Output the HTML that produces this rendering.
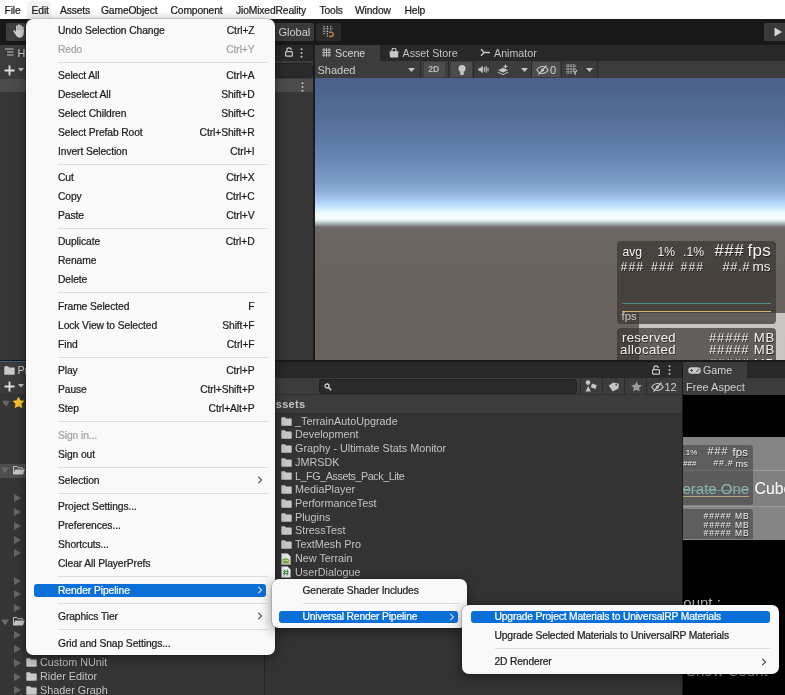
<!DOCTYPE html>
<html><head><meta charset="utf-8"><title>Unity Editor</title>
<style>
html,body{margin:0;padding:0;background:#383838;}
body{width:785px;height:695px;overflow:hidden;position:relative;font-family:"Liberation Sans",Arial,sans-serif;}
#root{position:absolute;left:0;top:0;width:785px;height:695px;overflow:hidden;will-change:transform;}
.abs{position:absolute;}
.t{position:absolute;white-space:pre;line-height:1;}
.u{position:absolute;white-space:pre;line-height:1;font-size:10.8px;color:#c3c3c3;}
.m{position:absolute;white-space:pre;line-height:1;font-size:10.3px;color:#1b1b1b;letter-spacing:-0.1px;-webkit-text-stroke:0.22px currentColor;}
.menu{position:absolute;background:#f9f9f9;border-radius:7px;box-shadow:0 0 0 0.6px rgba(0,0,0,.25),0 3px 12px 1px rgba(0,0,0,.38);}
.sep{position:absolute;height:1px;background:#dedede;}
.hl{position:absolute;background:#0a6fd6;border-radius:3px;}
.fold{position:absolute;width:11px;height:9px;}
.tri{position:absolute;width:0;height:0;border-left:7px solid #656565;border-top:4px solid transparent;border-bottom:4px solid transparent;}
</style></head><body><div id="root">

<div class="abs" style="left:0;top:0;width:785px;height:19px;background:#fff"></div>
<div class="abs" style="left:27px;top:1px;width:24px;height:17px;background:#f3f3f3;border-radius:3px"></div>
<div class="m" style="left:4.5px;top:5.8px;letter-spacing:-.14px">File</div>
<div class="m" style="left:31.6px;top:5.8px;letter-spacing:-.14px">Edit</div>
<div class="m" style="left:60px;top:5.8px;letter-spacing:-.14px">Assets</div>
<div class="m" style="left:101px;top:5.8px;letter-spacing:-.14px">GameObject</div>
<div class="m" style="left:170.5px;top:5.8px;letter-spacing:-.14px">Component</div>
<div class="m" style="left:236px;top:5.8px;letter-spacing:-.14px">JioMixedReality</div>
<div class="m" style="left:319.5px;top:5.8px;letter-spacing:-.14px">Tools</div>
<div class="m" style="left:355px;top:5.8px;letter-spacing:-.14px">Window</div>
<div class="m" style="left:404.5px;top:5.8px;letter-spacing:-.14px">Help</div>
<div class="abs" style="left:0;top:19px;width:785px;height:25.5px;background:#191919"></div>
<div class="abs" style="left:6px;top:23px;width:20px;height:18px;background:#3e3e3e;border-radius:2px"></div>
<div class="abs" style="left:270px;top:23px;width:44px;height:18px;background:#3a3a3a;border-radius:0 2px 2px 0"></div>
<div class="u" style="left:278.5px;top:27px;font-size:11px;color:#d0d0d0">Global</div>
<div class="abs" style="left:316px;top:23px;width:25px;height:18px;background:#2b2b2b;border-radius:2px"></div>
<div class="abs" style="left:764px;top:23px;width:24px;height:18px;background:#3a3a3a;border-radius:2px"></div>
<svg class="abs" style="left:774px;top:27px" width="9" height="10" viewBox="0 0 9 10"><path d="M0.5 0.5 L8 5 L0.5 9.5Z" fill="#d6d6d6"/></svg>
<svg class="abs" style="left:323px;top:26.3px" width="12" height="12" viewBox="0 0 12 12"><g stroke="#c9c9c9" stroke-width="1.1" stroke-dasharray="1.3 1"><path d="M1 0V9M4.4 0V11M7.8 0V5"/></g><g stroke="#9a9a9a" stroke-width=".8" stroke-dasharray="1.3 1"><path d="M0 2.6H10M0 5.8H6"/></g><path d="M6 6.2h2.2a2.1 2.1 0 0 1 0 4.2H6" fill="none" stroke="#b9773a" stroke-width="1.6"/></svg>
<svg class="abs" style="left:12.5px;top:24.3px" width="12" height="14" viewBox="0 0 12 14"><g fill="#d4d4d4"><rect x="3.1" y="1.3" width="1.7" height="7" rx=".85"/><rect x="5.1" y="0.3" width="1.7" height="7" rx=".85"/><rect x="7.1" y="0.9" width="1.7" height="7" rx=".85"/><rect x="9.1" y="2.6" width="1.6" height="6" rx=".8"/><path d="M3.1 6h7.6v3.2c0 2.6-1.5 4.5-3.9 4.5-1.7 0-2.7-.8-3.6-2.1L.4 7.5c-.5-.9.6-1.7 1.3-1L3.1 8z"/></g></svg>
<div class="abs" style="left:0;top:44.5px;width:314px;height:16.2px;background:#282828"></div>
<div class="abs" style="left:0;top:44.5px;width:60px;height:16.2px;background:#3c3c3c"></div>
<div class="abs" style="left:0;top:60.6px;width:314px;height:18.2px;background:#3c3c3c"></div>
<div class="abs" style="left:0;top:78.8px;width:314px;height:13.5px;background:#4b4b4b"></div>
<div class="abs" style="left:0;top:92.3px;width:314px;height:267.7px;background:#363636"></div>
<div class="abs" style="left:313px;top:44px;width:2px;height:316px;background:#1c1c1c"></div>
<svg class="abs" style="left:5px;top:48px" width="9" height="8" viewBox="0 0 9 8"><path d="M0 1H8.5M2 4H8.5M2 7H8.5" stroke="#bdbdbd" stroke-width="1.2"/></svg>
<div class="u" style="left:17.5px;top:48px;color:#d2d2d2">Hierarchy</div>
<svg class="abs" style="left:3.5px;top:64.5px" width="11" height="11" viewBox="0 0 11 11"><path d="M5.5 0.5V10.5M0.5 5.5H10.5" stroke="#e0e0e0" stroke-width="1.8"/></svg>
<svg class="abs" style="left:17.8px;top:67.6px" width="6" height="4" viewBox="0 0 6 4"><path d="M0 0H6L3 3.6Z" fill="#c4c4c4"/></svg>
<div class="abs" style="left:40px;top:63.5px;width:272px;height:13px;background:#2a2a2a;border-radius:3px;box-shadow:0 0 0 1px #222"></div>
<svg class="abs" style="left:284.5px;top:47px" width="8" height="10" viewBox="0 0 8 10"><rect x="0.6" y="4.6" width="6.8" height="4.6" rx="0.8" fill="none" stroke="#c4c4c4" stroke-width="1.2"/><path d="M1.8 4.6V3a2.2 2.2 0 0 1 4.4 0" fill="none" stroke="#c4c4c4" stroke-width="1.2"/></svg>
<svg class="abs" style="left:300.3px;top:47.5px" width="3" height="10" viewBox="0 0 3 10"><circle cx="1.5" cy="1.3" r="1" fill="#c4c4c4"/><circle cx="1.5" cy="5" r="1" fill="#c4c4c4"/><circle cx="1.5" cy="8.7" r="1" fill="#c4c4c4"/></svg>
<svg class="abs" style="left:301.3px;top:81.5px" width="3" height="10" viewBox="0 0 3 10"><circle cx="1.5" cy="1.3" r="1" fill="#c4c4c4"/><circle cx="1.5" cy="5" r="1" fill="#c4c4c4"/><circle cx="1.5" cy="8.7" r="1" fill="#c4c4c4"/></svg>
<div class="abs" style="left:315px;top:44.5px;width:470px;height:16.2px;background:#282828"></div>
<div class="abs" style="left:315px;top:44.5px;width:65px;height:16.2px;background:#3c3c3c"></div>
<div class="abs" style="left:315px;top:60.6px;width:470px;height:18px;background:#3c3c3c"></div>
<div class="abs" style="left:315px;top:77.8px;width:470px;height:.8px;background:#262626"></div>
<svg class="abs" style="left:321.5px;top:48px" width="9" height="9" viewBox="0 0 9 9"><path d="M2 0V9M4.5 0V9M7 0V9M0 2H9M0 4.5H9M0 7H9" stroke="#c4c4c4" stroke-width="0.9"/></svg>
<div class="u" style="left:335px;top:48.2px;color:#d6d6d6;font-size:10.7px">Scene</div>
<svg class="abs" style="left:388.7px;top:47.6px" width="10" height="10" viewBox="0 0 10 10"><path d="M0.5 3.2H9.5L9 9.6H1Z" fill="#c8c8c8"/><path d="M3 4V2.2a2 2 0 0 1 4 0V4" fill="none" stroke="#c8c8c8" stroke-width="1.1"/></svg>
<div class="u" style="left:402.5px;top:48.2px;font-size:10.7px">Asset Store</div>
<svg class="abs" style="left:480px;top:48px" width="11" height="9" viewBox="0 0 11 9"><path d="M1 1.2L4.2 4.5L1 7.8M4.2 4.5H10" fill="none" stroke="#c8c8c8" stroke-width="1.4"/></svg>
<div class="u" style="left:494px;top:48.2px;font-size:10.7px">Animator</div>
<div class="u" style="left:317.5px;top:65px;font-size:11px;color:#cfcfcf">Shaded</div>
<svg class="abs" style="left:407.5px;top:68px" width="7" height="4" viewBox="0 0 7 4"><path d="M0 0H7L3.5 4Z" fill="#c4c4c4"/></svg>
<div class="abs" style="left:420px;top:60.6px;width:1px;height:17.6px;background:#2a2a2a"></div>
<div class="abs" style="left:424px;top:61.6px;width:21px;height:15.8px;background:#4c4c4c"></div>
<div class="u" style="left:428.3px;top:65.3px;font-size:8.6px;font-weight:bold;color:#bdbdbd">2D</div>
<div class="abs" style="left:448px;top:60.6px;width:1px;height:17.6px;background:#2a2a2a"></div>
<div class="abs" style="left:451px;top:61.6px;width:21px;height:15.8px;background:#4c4c4c"></div>
<svg class="abs" style="left:457.5px;top:64.5px" width="8" height="11" viewBox="0 0 8 11"><circle cx="4" cy="3.6" r="3.5" fill="#c8c8c8"/><rect x="2.3" y="6.5" width="3.4" height="3.6" rx="0.6" fill="#c8c8c8"/></svg>
<div class="abs" style="left:473px;top:60.6px;width:1px;height:17.6px;background:#2a2a2a"></div>
<svg class="abs" style="left:478px;top:65px" width="11" height="9" viewBox="0 0 11 9"><path d="M0.5 3H2.2L4.8 0.8V8.2L2.2 6H0.5Z" fill="#c4c4c4"/><path d="M6.4 2.2V6.8M8.2 1.2V7.8M10 2.8V6.2" stroke="#c4c4c4" stroke-width="1.1"/></svg>
<svg class="abs" style="left:497px;top:64px" width="12" height="11" viewBox="0 0 12 11"><path d="M1 6.2L6 3.8L11 6.2L6 8.6Z" fill="#c4c4c4"/><path d="M1 8.2L6 10.6L11 8.2" fill="none" stroke="#c4c4c4" stroke-width="1"/><path d="M8.5 0L9.2 1.8L11 2.5L9.2 3.2L8.5 5L7.8 3.2L6 2.5L7.8 1.8Z" fill="#c4c4c4"/></svg>
<svg class="abs" style="left:520.5px;top:68px" width="7" height="4" viewBox="0 0 7 4"><path d="M0 0H7L3.5 4Z" fill="#c4c4c4"/></svg>
<div class="abs" style="left:531px;top:60.6px;width:1px;height:17.6px;background:#2a2a2a"></div>
<div class="abs" style="left:532px;top:61.6px;width:28px;height:15.8px;background:#4c4c4c"></div>
<svg class="abs" style="left:535.5px;top:64.5px" width="13" height="10" viewBox="0 0 13 10"><path d="M0.8 5C2.5 2.4 4.4 1.5 6.5 1.5S10.5 2.4 12.2 5C10.5 7.6 8.6 8.5 6.5 8.5S2.5 7.6 0.8 5Z" fill="none" stroke="#c4c4c4" stroke-width="1.1"/><circle cx="6.5" cy="5" r="1.6" fill="#c4c4c4"/><path d="M2.5 9.5L10.5 0.5" stroke="#c4c4c4" stroke-width="1.2"/></svg>
<div class="u" style="left:550px;top:65px;font-size:11px;color:#cfcfcf">0</div>
<div class="abs" style="left:561px;top:60.6px;width:1px;height:17.6px;background:#2a2a2a"></div>
<svg class="abs" style="left:565.5px;top:64px" width="12" height="11" viewBox="0 0 12 11"><g stroke="#c4c4c4" stroke-width="1" stroke-dasharray="1.3 0.9"><path d="M2 0V11M5 0V11M8 0V6"/><path d="M0 2H11M0 5H11M0 8H6"/></g><path d="M7 6.2L9 8.8L11 6.2M9 8.8V11" fill="none" stroke="#c4c4c4" stroke-width="1.2"/></svg>
<svg class="abs" style="left:586px;top:68px" width="7" height="4" viewBox="0 0 7 4"><path d="M0 0H7L3.5 4Z" fill="#c4c4c4"/></svg>
<div class="abs" style="left:596.5px;top:60.6px;width:1px;height:17.6px;background:#2a2a2a"></div>
<div class="abs" style="left:314.5px;top:78.3px;width:470.5px;height:281.7px;background:linear-gradient(to bottom,#4a618b 0px,#4f6890 21px,#546e98 41px,#5c79a6 61px,#6685b3 81px,#7a9ac6 101px,#8aaad6 111px,#9dbde6 118px,#b3d5f8 125px,#c6e5fb 129px,#dcf3fd 132px,#f0fbfe 135.5px,#f6fdfe 137.5px,#f6fdfe 141px,#c5d5d3 144px,#8e9897 147px,#726d6e 149px,#6e6766 151px,#6a6561 161px,#69635e 200px,#6a625c 281px)"></div>
<div class="abs" style="left:639px;top:313px;width:146px;height:47px;background:rgba(225,225,225,.78)"></div>
<div class="abs" style="left:616.5px;top:241px;width:159.5px;height:82.5px;background:rgba(58,54,50,.72);border-radius:4px"></div>
<div class="abs" style="left:616.5px;top:328px;width:159.5px;height:40px;background:rgba(58,54,50,.72);border-radius:4px 4px 0 0"></div>
<div class="abs" style="left:621.5px;top:302.5px;width:149px;height:1.3px;background:#4f8a89"></div>
<div class="abs" style="left:621.5px;top:310.8px;width:149px;height:1.3px;background:#d6b46e"></div>
<div class="t" style="left:622.5px;top:245.5px;font-size:12.2px;color:#f2f2f2;text-shadow:0.6px 0.8px 0 rgba(0,0,0,.55);">avg</div>
<div class="t" style="left:657.5px;top:245.5px;font-size:12.2px;color:#f2f2f2;text-shadow:0.6px 0.8px 0 rgba(0,0,0,.55);">1%</div>
<div class="t" style="left:683px;top:245.5px;font-size:12.2px;color:#f2f2f2;text-shadow:0.6px 0.8px 0 rgba(0,0,0,.55);">.1%</div>
<div class="t" style="left:714.5px;top:241.5px;font-size:16.5px;letter-spacing:.8px;color:#f2f2f2;text-shadow:0.6px 0.8px 0 rgba(0,0,0,.55);">###</div>
<div class="t" style="left:747.5px;top:241.5px;font-size:17px;letter-spacing:.3px;color:#f2f2f2;text-shadow:0.6px 0.8px 0 rgba(0,0,0,.55);">fps</div>
<div class="t" style="left:620.5px;top:261px;font-size:12.2px;letter-spacing:1.1px;color:#f2f2f2;text-shadow:0.6px 0.8px 0 rgba(0,0,0,.55);">###</div>
<div class="t" style="left:651px;top:261px;font-size:12.2px;letter-spacing:1.1px;color:#f2f2f2;text-shadow:0.6px 0.8px 0 rgba(0,0,0,.55);">###</div>
<div class="t" style="left:680.5px;top:261px;font-size:12.2px;letter-spacing:1.1px;color:#f2f2f2;text-shadow:0.6px 0.8px 0 rgba(0,0,0,.55);">###</div>
<div class="t" style="left:722.5px;top:260px;font-size:13px;letter-spacing:.6px;color:#f2f2f2;text-shadow:0.6px 0.8px 0 rgba(0,0,0,.55);">##.#</div>
<div class="t" style="left:752.5px;top:260px;font-size:13.6px;color:#f2f2f2;text-shadow:0.6px 0.8px 0 rgba(0,0,0,.55);">ms</div>
<div class="t" style="left:621.5px;top:310.8px;font-size:11.3px;color:#cfcac3">fps</div>
<div class="t" style="right:109px;top:330.5px;font-size:13.2px;letter-spacing:.35px;color:#f2f2f2;text-shadow:0.6px 0.8px 0 rgba(0,0,0,.55);">reserved</div>
<div class="t" style="right:109px;top:342.5px;font-size:13.2px;letter-spacing:.35px;color:#f2f2f2;text-shadow:0.6px 0.8px 0 rgba(0,0,0,.55);">allocated</div>
<div class="t" style="left:709px;top:330.5px;font-size:13.2px;letter-spacing:.75px;color:#f2f2f2;text-shadow:0.6px 0.8px 0 rgba(0,0,0,.55);">##### MB</div>
<div class="t" style="left:709px;top:342.5px;font-size:13.2px;letter-spacing:.75px;color:#f2f2f2;text-shadow:0.6px 0.8px 0 rgba(0,0,0,.55);">##### MB</div>
<div class="abs" style="left:616px;top:352px;width:169px;height:8px;overflow:hidden"><div class="t" style="left:64px;top:4.5px;font-size:13.2px;color:#f2f2f2;text-shadow:0.6px 0.8px 0 rgba(0,0,0,.55);">mono</div><div class="t" style="left:93px;top:4.5px;font-size:13.2px;letter-spacing:.75px;color:#f2f2f2;text-shadow:0.6px 0.8px 0 rgba(0,0,0,.55);">##### MB</div></div>
<div class="abs" style="left:0;top:360px;width:785px;height:2px;background:#191919"></div>
<div class="abs" style="left:0;top:362px;width:682px;height:16px;background:#282828"></div>
<div class="abs" style="left:0;top:361px;width:62px;height:17px;background:#3c3c3c"></div>
<div class="abs" style="left:0;top:361.2px;width:62px;height:1.3px;background:#3a5c8c"></div>
<div class="abs" style="left:0;top:378px;width:682px;height:17px;background:#3c3c3c"></div>
<div class="abs" style="left:0;top:395px;width:264px;height:300px;background:#353535"></div>
<div class="abs" style="left:264px;top:395px;width:1px;height:300px;background:#232323"></div>
<div class="abs" style="left:265px;top:395px;width:417px;height:18px;background:#3c3c3c"></div>
<div class="abs" style="left:265px;top:413px;width:417px;height:1px;background:#2a2a2a"></div>
<div class="abs" style="left:0px;top:394.3px;width:682px;height:.9px;background:#303030"></div>
<div class="abs" style="left:265px;top:414px;width:417px;height:281px;background:#333333"></div>
<div class="abs" style="left:681.5px;top:362px;width:1.5px;height:333px;background:#1c1c1c"></div>
<svg class="abs" style="left:4px;top:365.5px" width="11" height="9" viewBox="0 0 11 9"><path d="M0.3 0.9a.6.6 0 0 1 .6-.6H4l1 1.3h5.1a.6.6 0 0 1 .6.6V8.1a.6.6 0 0 1-.6.6H.9a.6.6 0 0 1-.6-.6Z" fill="#c8c8c8"/></svg>
<div class="u" style="left:17.6px;top:365px;color:#d2d2d2">Project</div>
<svg class="abs" style="left:3.5px;top:381px" width="11" height="11" viewBox="0 0 11 11"><path d="M5.5 0.5V10.5M0.5 5.5H10.5" stroke="#e0e0e0" stroke-width="1.8"/></svg>
<svg class="abs" style="left:17.8px;top:383.8px" width="6" height="4" viewBox="0 0 6 4"><path d="M0 0H6L3 3.6Z" fill="#c4c4c4"/></svg>
<svg class="abs" style="left:1.5px;top:399.8px" width="8" height="7.5" viewBox="0 0 8 6"><path d="M0 0H8L4 6Z" fill="#63655f"/></svg>
<svg class="abs" style="left:13.3px;top:396.6px" width="11" height="11" viewBox="0 0 11 11"><path d="M5.5 0.1L7.3 3.6L11 4.1L8.3 6.8L9 10.7L5.5 8.9L2 10.7L2.7 6.8L0 4.1L3.7 3.6Z" fill="#fdc72c" stroke="#fdc72c" stroke-width=".5" stroke-linejoin="round"/></svg>
<div class="abs" style="left:0;top:464px;width:264px;height:13.5px;background:#4d4d4d"></div>
<svg class="abs" style="left:1.2px;top:467.40000000000003px" width="8" height="7" viewBox="0 0 8 6"><path d="M0 0H8L4 6Z" fill="#696969"/></svg>
<svg class="abs" style="left:13px;top:466.1px" width="12" height="9" viewBox="0 0 12 9"><path d="M0.5 8.2V1a.5.5 0 0 1 .5-.5H4l1 1.3h4.3a.5.5 0 0 1 .5.5V3.4" fill="none" stroke="#c8c8c8" stroke-width="1"/><path d="M2.2 3.4H11.8L10 8.6H0.4Z" fill="#c8c8c8"/></svg>
<svg class="abs" style="left:1.2px;top:618.5px" width="8" height="7" viewBox="0 0 8 6"><path d="M0 0H8L4 6Z" fill="#696969"/></svg>
<svg class="abs" style="left:13px;top:617.2px" width="12" height="9" viewBox="0 0 12 9"><path d="M0.5 8.2V1a.5.5 0 0 1 .5-.5H4l1 1.3h4.3a.5.5 0 0 1 .5.5V3.4" fill="none" stroke="#c8c8c8" stroke-width="1"/><path d="M2.2 3.4H11.8L10 8.6H0.4Z" fill="#c8c8c8"/></svg>
<div class="tri" style="left:14px;top:494px"></div>
<div class="tri" style="left:14px;top:508px"></div>
<div class="tri" style="left:14px;top:522px"></div>
<div class="tri" style="left:14px;top:535.6px"></div>
<div class="tri" style="left:14px;top:549.3px"></div>
<div class="tri" style="left:14px;top:576.5px"></div>
<div class="tri" style="left:14px;top:590px"></div>
<div class="tri" style="left:14px;top:604px"></div>
<div class="tri" style="left:14px;top:631.4px"></div>
<div class="tri" style="left:14px;top:645px"></div>
<div class="tri" style="left:14px;top:658.8px"></div>
<div class="tri" style="left:14px;top:672.5px"></div>
<div class="tri" style="left:14px;top:686.2px"></div>
<svg class="abs" style="left:25.5px;top:658.0999999999999px" width="11" height="9" viewBox="0 0 11 9"><path d="M0.3 0.9a.6.6 0 0 1 .6-.6H4l1 1.3h5.1a.6.6 0 0 1 .6.6V8.1a.6.6 0 0 1-.6.6H.9a.6.6 0 0 1-.6-.6Z" fill="#c8c8c8"/></svg>
<div class="u" style="left:40px;top:657.1999999999999px">Custom NUnit</div>
<svg class="abs" style="left:25.5px;top:671.8px" width="11" height="9" viewBox="0 0 11 9"><path d="M0.3 0.9a.6.6 0 0 1 .6-.6H4l1 1.3h5.1a.6.6 0 0 1 .6.6V8.1a.6.6 0 0 1-.6.6H.9a.6.6 0 0 1-.6-.6Z" fill="#c8c8c8"/></svg>
<div class="u" style="left:40px;top:670.9px">Rider Editor</div>
<svg class="abs" style="left:25.5px;top:685.5px" width="11" height="9" viewBox="0 0 11 9"><path d="M0.3 0.9a.6.6 0 0 1 .6-.6H4l1 1.3h5.1a.6.6 0 0 1 .6.6V8.1a.6.6 0 0 1-.6.6H.9a.6.6 0 0 1-.6-.6Z" fill="#c8c8c8"/></svg>
<div class="u" style="left:40px;top:684.6px">Shader Graph</div>
<div class="abs" style="left:320px;top:380px;width:256px;height:12.5px;background:#2a2a2a;border-radius:3px;box-shadow:0 0 0 1px #212121"></div>
<svg class="abs" style="left:323.5px;top:382.5px" width="8" height="8" viewBox="0 0 8 8"><circle cx="3" cy="3" r="2" fill="none" stroke="#d0d0d0" stroke-width="1.3"/><path d="M4.6 4.6L7.2 7.2" stroke="#d0d0d0" stroke-width="1.5"/></svg>
<div class="abs" style="left:580px;top:378px;width:1px;height:17px;background:#2c2c2c"></div>
<div class="abs" style="left:602px;top:378px;width:1px;height:17px;background:#2c2c2c"></div>
<div class="abs" style="left:623.5px;top:378px;width:1px;height:17px;background:#2c2c2c"></div>
<div class="abs" style="left:645.6px;top:378px;width:1px;height:17px;background:#2c2c2c"></div>
<svg class="abs" style="left:584.5px;top:380px" width="12" height="12" viewBox="0 0 12 12"><circle cx="3" cy="2.6" r="2.3" fill="#c4c4c4"/><path d="M0.6 11.4L3.2 5.8L5.8 11.4Z" fill="#c4c4c4"/><rect x="6.4" y="4.4" width="5" height="4" fill="#c4c4c4" transform="rotate(20 9 6)"/></svg>
<svg class="abs" style="left:607.5px;top:381.5px" width="11" height="10" viewBox="0 0 11 10"><path d="M4.8 0.6L10.4 1L10.6 5.8L5.4 9.6L0.6 4.2Z" fill="#c4c4c4" transform="rotate(8 5 5)"/><circle cx="8.2" cy="2.8" r="0.9" fill="#3c3c3c"/></svg>
<svg class="abs" style="left:630.5px;top:381px" width="11" height="11" viewBox="0 0 11 11"><path d="M5.5 0.3L7.1 3.8L10.9 4.2L8.1 6.8L8.9 10.6L5.5 8.7L2.1 10.6L2.9 6.8L0.1 4.2L3.9 3.8Z" fill="#9a9a9a"/></svg>
<svg class="abs" style="left:651px;top:381.5px" width="13" height="10" viewBox="0 0 13 10"><path d="M0.8 5C2.5 2.4 4.4 1.5 6.5 1.5S10.5 2.4 12.2 5C10.5 7.6 8.6 8.5 6.5 8.5S2.5 7.6 0.8 5Z" fill="none" stroke="#c4c4c4" stroke-width="1.1"/><circle cx="6.5" cy="5" r="1.6" fill="#c4c4c4"/><path d="M2.5 9.5L10.5 0.5" stroke="#c4c4c4" stroke-width="1.2"/></svg>
<div class="u" style="left:664.5px;top:382px;font-size:11px;color:#cfcfcf">12</div>
<svg class="abs" style="left:651.5px;top:364.5px" width="8" height="10" viewBox="0 0 8 10"><rect x="0.6" y="4.6" width="6.8" height="4.6" rx="0.8" fill="none" stroke="#c4c4c4" stroke-width="1.2"/><path d="M1.8 4.6V3a2.2 2.2 0 0 1 4.4 0" fill="none" stroke="#c4c4c4" stroke-width="1.2"/></svg>
<svg class="abs" style="left:667.8px;top:364.5px" width="3" height="10" viewBox="0 0 3 10"><circle cx="1.5" cy="1.3" r="1" fill="#c4c4c4"/><circle cx="1.5" cy="5" r="1" fill="#c4c4c4"/><circle cx="1.5" cy="8.7" r="1" fill="#c4c4c4"/></svg>
<div class="u" style="left:267.5px;top:398.5px;font-weight:bold;font-size:11px;color:#c6c6c6;letter-spacing:.3px">Assets</div>
<svg class="abs" style="left:280.5px;top:416.5px" width="11" height="9" viewBox="0 0 11 9"><path d="M0.3 0.9a.6.6 0 0 1 .6-.6H4l1 1.3h5.1a.6.6 0 0 1 .6.6V8.1a.6.6 0 0 1-.6.6H.9a.6.6 0 0 1-.6-.6Z" fill="#c8c8c8"/></svg>
<div class="u" style="left:295px;top:415.6px">_TerrainAutoUpgrade</div>
<svg class="abs" style="left:280.5px;top:430.2px" width="11" height="9" viewBox="0 0 11 9"><path d="M0.3 0.9a.6.6 0 0 1 .6-.6H4l1 1.3h5.1a.6.6 0 0 1 .6.6V8.1a.6.6 0 0 1-.6.6H.9a.6.6 0 0 1-.6-.6Z" fill="#c8c8c8"/></svg>
<div class="u" style="left:295px;top:429.3px">Development</div>
<svg class="abs" style="left:280.5px;top:444.0px" width="11" height="9" viewBox="0 0 11 9"><path d="M0.3 0.9a.6.6 0 0 1 .6-.6H4l1 1.3h5.1a.6.6 0 0 1 .6.6V8.1a.6.6 0 0 1-.6.6H.9a.6.6 0 0 1-.6-.6Z" fill="#c8c8c8"/></svg>
<div class="u" style="left:295px;top:443.1px">Graphy - Ultimate Stats Monitor</div>
<svg class="abs" style="left:280.5px;top:457.7px" width="11" height="9" viewBox="0 0 11 9"><path d="M0.3 0.9a.6.6 0 0 1 .6-.6H4l1 1.3h5.1a.6.6 0 0 1 .6.6V8.1a.6.6 0 0 1-.6.6H.9a.6.6 0 0 1-.6-.6Z" fill="#c8c8c8"/></svg>
<div class="u" style="left:295px;top:456.8px">JMRSDK</div>
<svg class="abs" style="left:280.5px;top:471.4px" width="11" height="9" viewBox="0 0 11 9"><path d="M0.3 0.9a.6.6 0 0 1 .6-.6H4l1 1.3h5.1a.6.6 0 0 1 .6.6V8.1a.6.6 0 0 1-.6.6H.9a.6.6 0 0 1-.6-.6Z" fill="#c8c8c8"/></svg>
<div class="u" style="left:295px;top:470.5px;letter-spacing:-.45px">L_FG_Assets_Pack_Lite</div>
<svg class="abs" style="left:280.5px;top:485.2px" width="11" height="9" viewBox="0 0 11 9"><path d="M0.3 0.9a.6.6 0 0 1 .6-.6H4l1 1.3h5.1a.6.6 0 0 1 .6.6V8.1a.6.6 0 0 1-.6.6H.9a.6.6 0 0 1-.6-.6Z" fill="#c8c8c8"/></svg>
<div class="u" style="left:295px;top:484.2px">MediaPlayer</div>
<svg class="abs" style="left:280.5px;top:498.9px" width="11" height="9" viewBox="0 0 11 9"><path d="M0.3 0.9a.6.6 0 0 1 .6-.6H4l1 1.3h5.1a.6.6 0 0 1 .6.6V8.1a.6.6 0 0 1-.6.6H.9a.6.6 0 0 1-.6-.6Z" fill="#c8c8c8"/></svg>
<div class="u" style="left:295px;top:498.0px">PerformanceTest</div>
<svg class="abs" style="left:280.5px;top:512.6px" width="11" height="9" viewBox="0 0 11 9"><path d="M0.3 0.9a.6.6 0 0 1 .6-.6H4l1 1.3h5.1a.6.6 0 0 1 .6.6V8.1a.6.6 0 0 1-.6.6H.9a.6.6 0 0 1-.6-.6Z" fill="#c8c8c8"/></svg>
<div class="u" style="left:295px;top:511.7px">Plugins</div>
<svg class="abs" style="left:280.5px;top:526.3px" width="11" height="9" viewBox="0 0 11 9"><path d="M0.3 0.9a.6.6 0 0 1 .6-.6H4l1 1.3h5.1a.6.6 0 0 1 .6.6V8.1a.6.6 0 0 1-.6.6H.9a.6.6 0 0 1-.6-.6Z" fill="#c8c8c8"/></svg>
<div class="u" style="left:295px;top:525.4px">StressTest</div>
<svg class="abs" style="left:280.5px;top:540.1px" width="11" height="9" viewBox="0 0 11 9"><path d="M0.3 0.9a.6.6 0 0 1 .6-.6H4l1 1.3h5.1a.6.6 0 0 1 .6.6V8.1a.6.6 0 0 1-.6.6H.9a.6.6 0 0 1-.6-.6Z" fill="#c8c8c8"/></svg>
<div class="u" style="left:295px;top:539.2px">TextMesh Pro</div>
<svg class="abs" style="left:281px;top:552.5px" width="10" height="12" viewBox="0 0 10 12"><path d="M0.5 0.5H6.5L9.5 3.5V11.5H0.5Z" fill="#e8e8e8" stroke="#9a9a9a" stroke-width=".6"/><path d="M1.5 10.5V6.5C3.5 4.5 6.5 4.8 8.5 7V10.5Z" fill="#6fa63a"/><path d="M1.5 8.5C3.5 6.5 6 7 8.5 9" stroke="#e8f0d8" stroke-width=".8" fill="none"/></svg>
<div class="u" style="left:295px;top:552.9px">New Terrain</div>
<svg class="abs" style="left:281px;top:566.23px" width="10" height="12" viewBox="0 0 10 12"><path d="M0.5 0.5H6.5L9.5 3.5V11.5H0.5Z" fill="#eeeeee" stroke="#9a9a9a" stroke-width=".6"/><path d="M3.8 3.5L3.2 9.5M6.6 3.5L6 9.5M2.2 5.4H7.8M1.9 7.6H7.5" stroke="#3f8a4a" stroke-width="1"/></svg>
<div class="u" style="left:295px;top:566.6px">UserDialogue</div>
<div class="abs" style="left:683px;top:362px;width:102px;height:16px;background:#282828"></div>
<div class="abs" style="left:683px;top:362px;width:63.5px;height:16px;background:#3c3c3c"></div>
<div class="abs" style="left:683px;top:378px;width:102px;height:17px;background:#3c3c3c"></div>
<div class="abs" style="left:683px;top:395px;width:102px;height:300px;background:#000"></div>
<svg class="abs" style="left:687.5px;top:366.5px" width="13" height="7" viewBox="0 0 13 7"><rect x="0.2" y="0.3" width="12.6" height="6.4" rx="3.2" fill="#c8c8c8"/><path d="M2.2 3.5H5M3.6 2.1V4.9" stroke="#3c3c3c" stroke-width="0.9"/><circle cx="9" cy="4.2" r="0.8" fill="#3c3c3c"/><circle cx="10.6" cy="2.8" r="0.8" fill="#3c3c3c"/></svg>
<div class="u" style="left:703px;top:365px;font-size:10.7px;color:#d2d2d2">Game</div>
<div class="u" style="left:686px;top:381.5px;font-size:11px;color:#cfcfcf">Free Aspect</div>
<div class="abs" style="left:683px;top:436.5px;width:102px;height:103px;background:#858585"></div>
<div class="abs" style="left:683px;top:470px;width:102px;height:37px;background:#808080;box-shadow:inset 0 1px 0 #9a9a9a,inset 0 -1px 0 #9a9a9a"></div>
<div class="abs" style="left:683px;top:444.5px;width:70px;height:60px;background:rgba(40,40,40,.42);border-radius:0 3px 3px 0"></div>
<div class="abs" style="left:683px;top:508.5px;width:70px;height:30.5px;background:rgba(40,40,40,.42);border-radius:0 3px 0 0"></div>
<div class="t" style="left:683.5px;top:448.5px;font-size:8px;color:#f0f0f0;text-shadow:0.5px 0.6px 0 rgba(0,0,0,.5);">.1%</div>
<div class="t" style="left:707.5px;top:446px;font-size:10.8px;letter-spacing:1px;color:#f0f0f0;text-shadow:0.5px 0.6px 0 rgba(0,0,0,.5);">###</div>
<div class="t" style="left:732.5px;top:445.5px;font-size:11.6px;color:#f0f0f0;text-shadow:0.5px 0.6px 0 rgba(0,0,0,.5);">fps</div>
<div class="t" style="left:683px;top:459.5px;font-size:8px;color:#f0f0f0;text-shadow:0.5px 0.6px 0 rgba(0,0,0,.5);">###</div>
<div class="t" style="left:713.5px;top:459px;font-size:8.8px;letter-spacing:.7px;color:#f0f0f0;text-shadow:0.5px 0.6px 0 rgba(0,0,0,.5);">##.#</div>
<div class="t" style="left:735.5px;top:458.5px;font-size:9.4px;color:#f0f0f0;text-shadow:0.5px 0.6px 0 rgba(0,0,0,.5);">ms</div>
<div class="t" style="right:35.8px;top:480.5px;font-size:15px;color:#8db3ae">erate One</div>
<div class="t" style="left:754.5px;top:480.5px;font-size:15.8px;color:#fff">Cube</div>
<div class="abs" style="left:683px;top:490px;width:66px;height:1px;background:#6f9c98"></div>
<div class="abs" style="left:683px;top:496.3px;width:66px;height:1.2px;background:#b5a47a"></div>
<div class="t" style="left:703.5px;top:512px;font-size:8.6px;letter-spacing:.85px;color:#f0f0f0;text-shadow:0.5px 0.6px 0 rgba(0,0,0,.5);">##### MB</div>
<div class="t" style="left:703.5px;top:520.5px;font-size:8.6px;letter-spacing:.85px;color:#f0f0f0;text-shadow:0.5px 0.6px 0 rgba(0,0,0,.5);">##### MB</div>
<div class="t" style="left:703.5px;top:529px;font-size:8.6px;letter-spacing:.85px;color:#f0f0f0;text-shadow:0.5px 0.6px 0 rgba(0,0,0,.5);">##### MB</div>
<div class="abs" style="left:683px;top:590px;width:102px;height:20px;overflow:hidden"><div class="t" style="left:-10.5px;top:5px;font-size:15px;color:#b9b9b9">Count :</div></div>
<div class="abs" style="left:683px;top:664px;width:102px;height:11.7px;overflow:hidden"><div class="t" style="left:3px;top:-1.5px;font-size:15px;color:#9a9a9a">Show Count</div></div>
<div class="menu" style="left:25.5px;top:19px;width:249.5px;height:635.5px"></div>
<div class="sep" style="left:58px;top:61.5px;width:209.5px"></div>
<div class="sep" style="left:58px;top:163.5px;width:209.5px"></div>
<div class="sep" style="left:58px;top:227.5px;width:209.5px"></div>
<div class="sep" style="left:58px;top:292.0px;width:209.5px"></div>
<div class="sep" style="left:58px;top:356.5px;width:209.5px"></div>
<div class="sep" style="left:58px;top:421.0px;width:209.5px"></div>
<div class="sep" style="left:58px;top:466.5px;width:209.5px"></div>
<div class="sep" style="left:58px;top:492.5px;width:209.5px"></div>
<div class="sep" style="left:58px;top:576.0px;width:209.5px"></div>
<div class="sep" style="left:58px;top:602.5px;width:209.5px"></div>
<div class="sep" style="left:58px;top:629.0px;width:209.5px"></div>
<div class="m" style="left:58px;top:25.5px;color:#1b1b1b">Undo Selection Change</div>
<div class="m" style="right:530.5px;top:25.5px;color:#1b1b1b">Ctrl+Z</div>
<div class="m" style="left:58px;top:44.5px;color:#a2a2a2">Redo</div>
<div class="m" style="right:530.5px;top:44.5px;color:#a2a2a2">Ctrl+Y</div>
<div class="m" style="left:58px;top:70.5px;color:#1b1b1b">Select All</div>
<div class="m" style="right:530.5px;top:70.5px;color:#1b1b1b">Ctrl+A</div>
<div class="m" style="left:58px;top:89.5px;color:#1b1b1b">Deselect All</div>
<div class="m" style="right:530.5px;top:89.5px;color:#1b1b1b">Shift+D</div>
<div class="m" style="left:58px;top:108.5px;color:#1b1b1b">Select Children</div>
<div class="m" style="right:530.5px;top:108.5px;color:#1b1b1b">Shift+C</div>
<div class="m" style="left:58px;top:127.5px;color:#1b1b1b">Select Prefab Root</div>
<div class="m" style="right:530.5px;top:127.5px;color:#1b1b1b">Ctrl+Shift+R</div>
<div class="m" style="left:58px;top:146.5px;color:#1b1b1b">Invert Selection</div>
<div class="m" style="right:530.5px;top:146.5px;color:#1b1b1b">Ctrl+I</div>
<div class="m" style="left:58px;top:172.5px;color:#1b1b1b">Cut</div>
<div class="m" style="right:530.5px;top:172.5px;color:#1b1b1b">Ctrl+X</div>
<div class="m" style="left:58px;top:191.5px;color:#1b1b1b">Copy</div>
<div class="m" style="right:530.5px;top:191.5px;color:#1b1b1b">Ctrl+C</div>
<div class="m" style="left:58px;top:210.5px;color:#1b1b1b">Paste</div>
<div class="m" style="right:530.5px;top:210.5px;color:#1b1b1b">Ctrl+V</div>
<div class="m" style="left:58px;top:236.5px;color:#1b1b1b">Duplicate</div>
<div class="m" style="right:530.5px;top:236.5px;color:#1b1b1b">Ctrl+D</div>
<div class="m" style="left:58px;top:255.5px;color:#1b1b1b">Rename</div>
<div class="m" style="left:58px;top:274.5px;color:#1b1b1b">Delete</div>
<div class="m" style="left:58px;top:301.5px;color:#1b1b1b">Frame Selected</div>
<div class="m" style="right:530.5px;top:301.5px;color:#1b1b1b">F</div>
<div class="m" style="left:58px;top:320.5px;color:#1b1b1b">Lock View to Selected</div>
<div class="m" style="right:530.5px;top:320.5px;color:#1b1b1b">Shift+F</div>
<div class="m" style="left:58px;top:339.5px;color:#1b1b1b">Find</div>
<div class="m" style="right:530.5px;top:339.5px;color:#1b1b1b">Ctrl+F</div>
<div class="m" style="left:58px;top:365.5px;color:#1b1b1b">Play</div>
<div class="m" style="right:530.5px;top:365.5px;color:#1b1b1b">Ctrl+P</div>
<div class="m" style="left:58px;top:384.5px;color:#1b1b1b">Pause</div>
<div class="m" style="right:530.5px;top:384.5px;color:#1b1b1b">Ctrl+Shift+P</div>
<div class="m" style="left:58px;top:403.5px;color:#1b1b1b">Step</div>
<div class="m" style="right:530.5px;top:403.5px;color:#1b1b1b">Ctrl+Alt+P</div>
<div class="m" style="left:58px;top:430.5px;color:#a2a2a2">Sign in...</div>
<div class="m" style="left:58px;top:449.5px;color:#1b1b1b">Sign out</div>
<div class="m" style="left:58px;top:475.5px;color:#1b1b1b">Selection</div>
<svg class="abs" style="left:257px;top:476px" width="6" height="8" viewBox="0 0 6 8"><path d="M1.2 0.8 L4.6 4 L1.2 7.2" fill="none" stroke="#555" stroke-width="1.1"/></svg>
<div class="m" style="left:58px;top:501.5px;color:#1b1b1b">Project Settings...</div>
<div class="m" style="left:58px;top:520.5px;color:#1b1b1b">Preferences...</div>
<div class="m" style="left:58px;top:539.5px;color:#1b1b1b">Shortcuts...</div>
<div class="m" style="left:58px;top:558.5px;color:#1b1b1b">Clear All PlayerPrefs</div>
<div class="hl" style="left:34px;top:584px;width:232px;height:12.5px"></div>
<div class="m" style="left:58px;top:585.5px;color:#fff">Render Pipeline</div>
<svg class="abs" style="left:257px;top:586px" width="6" height="8" viewBox="0 0 6 8"><path d="M1.2 0.8 L4.6 4 L1.2 7.2" fill="none" stroke="#cfe2f7" stroke-width="1.1"/></svg>
<div class="m" style="left:58px;top:611.5px;color:#1b1b1b">Graphics Tier</div>
<svg class="abs" style="left:257px;top:612px" width="6" height="8" viewBox="0 0 6 8"><path d="M1.2 0.8 L4.6 4 L1.2 7.2" fill="none" stroke="#555" stroke-width="1.1"/></svg>
<div class="m" style="left:58px;top:638.5px;color:#1b1b1b">Grid and Snap Settings...</div>
<div class="menu" style="left:272px;top:578.7px;width:195px;height:49.3px"></div>
<div class="m" style="left:302.5px;top:585.8px;letter-spacing:-.17px">Generate Shader Includes</div>
<div class="sep" style="left:302.5px;top:602.5px;width:157px"></div>
<div class="hl" style="left:278.7px;top:611px;width:179.5px;height:12px"></div>
<div class="m" style="left:302.5px;top:612.2px;color:#fff;letter-spacing:-.17px">Universal Render Pipeline</div>
<svg class="abs" style="left:449px;top:613px" width="6" height="8" viewBox="0 0 6 8"><path d="M1.2 0.8 L4.6 4 L1.2 7.2" fill="none" stroke="#cfe2f7" stroke-width="1.1"/></svg>
<div class="menu" style="left:462px;top:605px;width:316.5px;height:69px"></div>
<div class="hl" style="left:470.5px;top:610.7px;width:299.5px;height:12px"></div>
<div class="m" style="left:494.5px;top:612px;color:#fff;letter-spacing:-.17px">Upgrade Project Materials to UniversalRP Materials</div>
<div class="m" style="left:494.5px;top:630.8px;letter-spacing:-.17px">Upgrade Selected Materials to UniversalRP Materials</div>
<div class="sep" style="left:494.5px;top:648.3px;width:276px"></div>
<div class="m" style="left:494.5px;top:657.2px;letter-spacing:-.17px">2D Renderer</div>
<svg class="abs" style="left:761px;top:658px" width="6" height="8" viewBox="0 0 6 8"><path d="M1.2 0.8 L4.6 4 L1.2 7.2" fill="none" stroke="#444" stroke-width="1.1"/></svg>
</div></body></html>
